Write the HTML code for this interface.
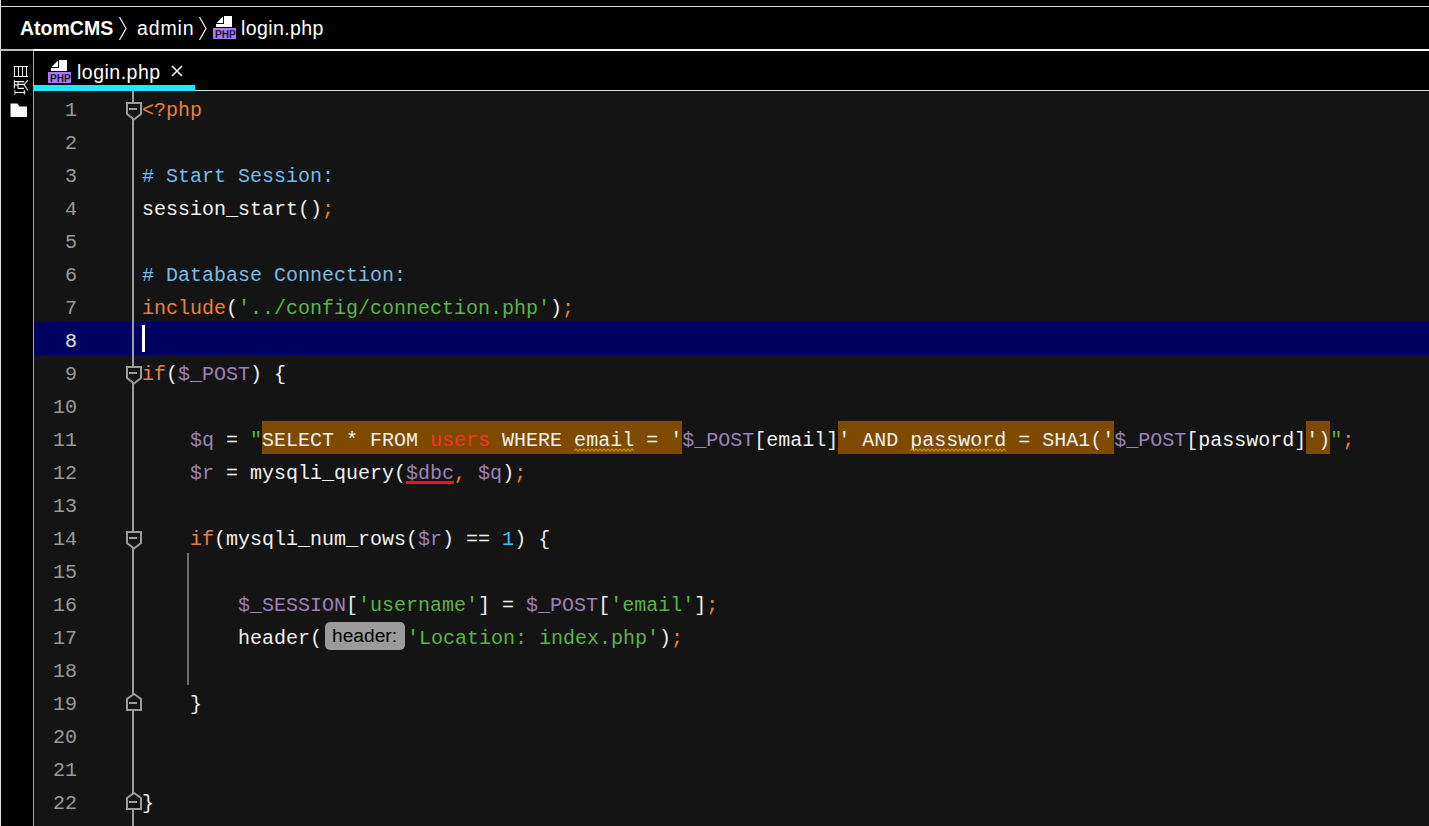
<!DOCTYPE html>
<html><head><meta charset="utf-8">
<style>
*{margin:0;padding:0;box-sizing:border-box}
html,body{width:1429px;height:826px;overflow:hidden;background:#000}
body{position:relative;font-family:"Liberation Sans",sans-serif}
.abs{position:absolute}
.ui{font-family:"Liberation Sans",sans-serif;color:#fff;white-space:pre}
#editor{position:absolute;left:34px;top:91px;width:1395px;height:735px;background:#141414;overflow:hidden}
.ln{position:absolute;left:0;width:43px;text-align:right;font-family:"Liberation Mono",monospace;font-size:20px;color:#9a9a9a;height:33px;line-height:33px}
.code{position:absolute;left:108px;height:33px;line-height:33px;font-family:"Liberation Mono",monospace;font-size:20px;color:#f0f0f0;white-space:pre}
.t{position:relative;top:3px}
.k{color:#e8803c}
.s{color:#5bb545}
.c{color:#74bdea}
.v{color:#9c82b8}
.n{color:#32c6fa}
.r{color:#ff2c2c}
.hl{position:absolute;height:33px;background:#7d4a00}
.wavy{position:absolute;height:4px}
</style></head><body>
<!-- frame lines -->
<div class="abs" style="left:0;top:0;width:1px;height:826px;background:#dcdcdc"></div>
<div class="abs" style="left:0;top:6px;width:1429px;height:1px;background:#dcdcdc"></div>
<div class="abs" style="left:0;top:49px;width:33px;height:2px;background:#bebebe"></div>
<div class="abs" style="left:33px;top:49px;width:1396px;height:2px;background:#f8f8f8"></div>
<div class="abs" style="left:33px;top:51px;width:1px;height:775px;background:#a8a8a8"></div>

<!-- breadcrumb -->
<div class="abs ui" style="left:20px;top:16px;font-size:19.5px;font-weight:bold;line-height:24px">AtomCMS</div>
<svg class="abs" style="left:118px;top:16px" width="10" height="25" viewBox="0 0 10 25"><path d="M1.5 1 L8 12.5 L1.5 24" fill="none" stroke="#f0f0f0" stroke-width="1.3"/></svg>
<div class="abs ui" style="left:137px;top:16px;font-size:19.5px;line-height:24px;letter-spacing:0.85px">admin</div>
<svg class="abs" style="left:198px;top:16px" width="10" height="25" viewBox="0 0 10 25"><path d="M1.5 1 L8 12.5 L1.5 24" fill="none" stroke="#f0f0f0" stroke-width="1.3"/></svg>
<svg class="abs" style="left:213px;top:16px" width="24" height="24" viewBox="0 0 24 24">
  <path d="M11 0 H19 V11 H3 V8 H11 Z" fill="#fff"/>
  <path d="M3.5 7 L10 0.5 V7 Z" fill="#fff"/>
  <rect x="0" y="12" width="23" height="11" fill="#a67cf2"/>
  <text x="2" y="21.6" textLength="20.8" lengthAdjust="spacingAndGlyphs" font-family="Liberation Sans" font-weight="bold" font-size="10" fill="#000" stroke="#a67cf2" stroke-width="0.25">PHP</text>
</svg>
<div class="abs ui" style="left:241px;top:16px;font-size:19.5px;line-height:24px;letter-spacing:0.4px">login.php</div>

<!-- left tool strip -->
<svg class="abs" style="left:9px;top:62px" width="22" height="60" viewBox="0 0 22 60">
  <g fill="none" stroke="#f2f2f2" stroke-width="1.1">
    <path d="M4.5 4.5 H19 M4.5 14.5 H19 M5.5 4.5 V14.5 M9.5 4.5 V14.5 M13.5 4.5 V14.5 M17.5 4.5 V14.5" stroke-width="1"/>
    <path d="M5.4 18.3 V26.6 M5.4 19.6 H15.3 M9 19.6 V26.4 M5.4 22.9 H9 M9 22.4 H15 M9 26.4 H15 M18.7 18.3 L15 22.9 Q17 25 18.7 28.3 M5.9 30.5 H16.3 M5.9 28.3 V32.5 M15.3 28.3 V32.5"/>
  </g>
  <path d="M1.5 41.5 H8.5 L10.5 44.5 H18 V55 H1.5 Z" fill="#fafafa"/>
</svg>

<!-- tab -->
<svg class="abs" style="left:48px;top:60px" width="24" height="24" viewBox="0 0 24 24">
  <path d="M11 0 H19 V11 H3 V8 H11 Z" fill="#fff"/>
  <path d="M3.5 7 L10 0.5 V7 Z" fill="#fff"/>
  <rect x="0" y="12" width="23" height="11" fill="#a67cf2"/>
  <text x="2" y="21.6" textLength="20.8" lengthAdjust="spacingAndGlyphs" font-family="Liberation Sans" font-weight="bold" font-size="10" fill="#000" stroke="#a67cf2" stroke-width="0.25">PHP</text>
</svg>
<div class="abs ui" style="left:77px;top:60px;font-size:19.5px;line-height:24px;letter-spacing:0.5px">login.php</div>
<svg class="abs" style="left:170px;top:64px" width="14" height="14" viewBox="0 0 14 14"><path d="M2 2 L12 12 M12 2 L2 12" stroke="#f4f4f4" stroke-width="1.6"/></svg>
<div class="abs" style="left:34px;top:90px;width:1395px;height:1px;background:#e0e0e0"></div>
<div class="abs" style="left:34px;top:85px;width:161px;height:6px;background:#1ee6fc"></div>

<div id="editor">
<div class="abs" style="left:0;top:231px;width:1395px;height:33px;background:#000060"></div>
<div class="hl" style="left:228px;top:330px;width:420px"></div>
<div class="hl" style="left:804px;top:330px;width:276px"></div>
<div class="hl" style="left:1272px;top:330px;width:24px"></div>
<div class="ln" style="top:0px;color:#9a9a9a"><span class="t">1</span></div>
<div class="ln" style="top:33px;color:#9a9a9a"><span class="t">2</span></div>
<div class="ln" style="top:66px;color:#9a9a9a"><span class="t">3</span></div>
<div class="ln" style="top:99px;color:#9a9a9a"><span class="t">4</span></div>
<div class="ln" style="top:132px;color:#9a9a9a"><span class="t">5</span></div>
<div class="ln" style="top:165px;color:#9a9a9a"><span class="t">6</span></div>
<div class="ln" style="top:198px;color:#9a9a9a"><span class="t">7</span></div>
<div class="ln" style="top:231px;color:#e6e6e6"><span class="t">8</span></div>
<div class="ln" style="top:264px;color:#9a9a9a"><span class="t">9</span></div>
<div class="ln" style="top:297px;color:#9a9a9a"><span class="t">10</span></div>
<div class="ln" style="top:330px;color:#9a9a9a"><span class="t">11</span></div>
<div class="ln" style="top:363px;color:#9a9a9a"><span class="t">12</span></div>
<div class="ln" style="top:396px;color:#9a9a9a"><span class="t">13</span></div>
<div class="ln" style="top:429px;color:#9a9a9a"><span class="t">14</span></div>
<div class="ln" style="top:462px;color:#9a9a9a"><span class="t">15</span></div>
<div class="ln" style="top:495px;color:#9a9a9a"><span class="t">16</span></div>
<div class="ln" style="top:528px;color:#9a9a9a"><span class="t">17</span></div>
<div class="ln" style="top:561px;color:#9a9a9a"><span class="t">18</span></div>
<div class="ln" style="top:594px;color:#9a9a9a"><span class="t">19</span></div>
<div class="ln" style="top:627px;color:#9a9a9a"><span class="t">20</span></div>
<div class="ln" style="top:660px;color:#9a9a9a"><span class="t">21</span></div>
<div class="ln" style="top:693px;color:#9a9a9a"><span class="t">22</span></div>
<div class="abs" style="left:98px;top:0;width:2px;height:735px;background:#9c9c9c"></div>
<div class="abs" style="left:153px;top:462px;width:2px;height:132px;background:#6e6e6e"></div>
<div class="code" style="top:0px"><span class="t"><span class="k">&lt;?php</span></span></div>
<div class="code" style="top:66px"><span class="t"><span class="c"># Start Session:</span></span></div>
<div class="code" style="top:99px"><span class="t">session_start()<span class="k">;</span></span></div>
<div class="code" style="top:165px"><span class="t"><span class="c"># Database Connection:</span></span></div>
<div class="code" style="top:198px"><span class="t"><span class="k">include</span>(<span class="s">'../config/connection.php'</span>)<span class="k">;</span></span></div>
<div class="code" style="top:264px"><span class="t"><span class="k">if</span>(<span class="v">$_POST</span>) {</span></div>
<div class="code" style="top:330px"><span class="t">    <span class="v">$q</span> = <span class="s">"</span>SELECT * FROM <span class="r">users</span> WHERE email = '<span class="v">$_POST</span>[email]' AND password = SHA1('<span class="v">$_POST</span>[password]')<span class="s">"</span><span class="k">;</span></span></div>
<div class="code" style="top:363px"><span class="t">    <span class="v">$r</span> = mysqli_query(<span class="v">$dbc</span><span class="k">,</span> <span class="v">$q</span>)<span class="k">;</span></span></div>
<div class="code" style="top:429px"><span class="t">    <span class="k">if</span>(mysqli_num_rows(<span class="v">$r</span>) == <span class="n">1</span>) {</span></div>
<div class="code" style="top:495px"><span class="t">        <span class="v">$_SESSION</span>[<span class="s">'username'</span>] = <span class="v">$_POST</span>[<span class="s">'email'</span>]<span class="k">;</span></span></div>
<div class="code" style="top:528px"><span class="t">        header(<span style="display:inline-block;width:85px"></span><span class="s">'Location: index.php'</span>)<span class="k">;</span></span></div>
<div class="code" style="top:594px"><span class="t">    }</span></div>
<div class="code" style="top:693px"><span class="t">}</span></div>
<div class="abs" style="left:291px;top:531px;width:80px;height:28px;border-radius:5px;background:#9b9b9b"></div>
<div class="abs" style="left:298px;top:531px;height:28px;line-height:28px;font-family:&quot;Liberation Sans&quot;,sans-serif;font-size:19.2px;color:#000">header:</div>
<div class="abs" style="left:108px;top:234px;width:3px;height:27px;background:#fff"></div>
<svg class="abs" style="left:540px;top:357px" width="60" height="4" viewBox="0 0 60 4"><path d="M0 3 L2 0.8 L4 3.2 L6 0.8 L8 3.2 L10 0.8 L12 3.2 L14 0.8 L16 3.2 L18 0.8 L20 3.2 L22 0.8 L24 3.2 L26 0.8 L28 3.2 L30 0.8 L32 3.2 L34 0.8 L36 3.2 L38 0.8 L40 3.2 L42 0.8 L44 3.2 L46 0.8 L48 3.2 L50 0.8 L52 3.2 L54 0.8 L56 3.2 L58 0.8 L60 3.2" fill="none" stroke="#b89a18" stroke-width="1.1"/></svg>
<svg class="abs" style="left:876px;top:357px" width="96" height="4" viewBox="0 0 96 4"><path d="M0 3 L2 0.8 L4 3.2 L6 0.8 L8 3.2 L10 0.8 L12 3.2 L14 0.8 L16 3.2 L18 0.8 L20 3.2 L22 0.8 L24 3.2 L26 0.8 L28 3.2 L30 0.8 L32 3.2 L34 0.8 L36 3.2 L38 0.8 L40 3.2 L42 0.8 L44 3.2 L46 0.8 L48 3.2 L50 0.8 L52 3.2 L54 0.8 L56 3.2 L58 0.8 L60 3.2 L62 0.8 L64 3.2 L66 0.8 L68 3.2 L70 0.8 L72 3.2 L74 0.8 L76 3.2 L78 0.8 L80 3.2 L82 0.8 L84 3.2 L86 0.8 L88 3.2 L90 0.8 L92 3.2 L94 0.8 L96 3.2" fill="none" stroke="#b89a18" stroke-width="1.1"/></svg>
<div class="abs" style="left:372px;top:390px;width:48px;height:3px;background:#ff0a28"></div>
<svg class="abs" style="left:92px;top:10px" width="16" height="21" viewBox="0 0 16 21"><path d="M1 2 H15 V13 L8 18.5 L1 13 Z" fill="#141414" stroke="#9c9c9c" stroke-width="2" stroke-linejoin="miter"/><path d="M3 8 H11" stroke="#9c9c9c" stroke-width="2"/></svg>
<svg class="abs" style="left:92px;top:274px" width="16" height="21" viewBox="0 0 16 21"><path d="M1 2 H15 V13 L8 18.5 L1 13 Z" fill="#141414" stroke="#9c9c9c" stroke-width="2" stroke-linejoin="miter"/><path d="M3 8 H11" stroke="#9c9c9c" stroke-width="2"/></svg>
<svg class="abs" style="left:92px;top:439px" width="16" height="21" viewBox="0 0 16 21"><path d="M1 2 H15 V13 L8 18.5 L1 13 Z" fill="#141414" stroke="#9c9c9c" stroke-width="2" stroke-linejoin="miter"/><path d="M3 8 H11" stroke="#9c9c9c" stroke-width="2"/></svg>
<svg class="abs" style="left:92px;top:602px" width="16" height="20" viewBox="0 0 16 20"><path d="M1 17 H15 V6 L8 1 L1 6 Z" fill="#141414" stroke="#9c9c9c" stroke-width="2" stroke-linejoin="miter"/><path d="M3 10 H11" stroke="#9c9c9c" stroke-width="2"/></svg>
<svg class="abs" style="left:92px;top:701px" width="16" height="20" viewBox="0 0 16 20"><path d="M1 17 H15 V6 L8 1 L1 6 Z" fill="#141414" stroke="#9c9c9c" stroke-width="2" stroke-linejoin="miter"/><path d="M3 10 H11" stroke="#9c9c9c" stroke-width="2"/></svg>
</div>
</body></html>
